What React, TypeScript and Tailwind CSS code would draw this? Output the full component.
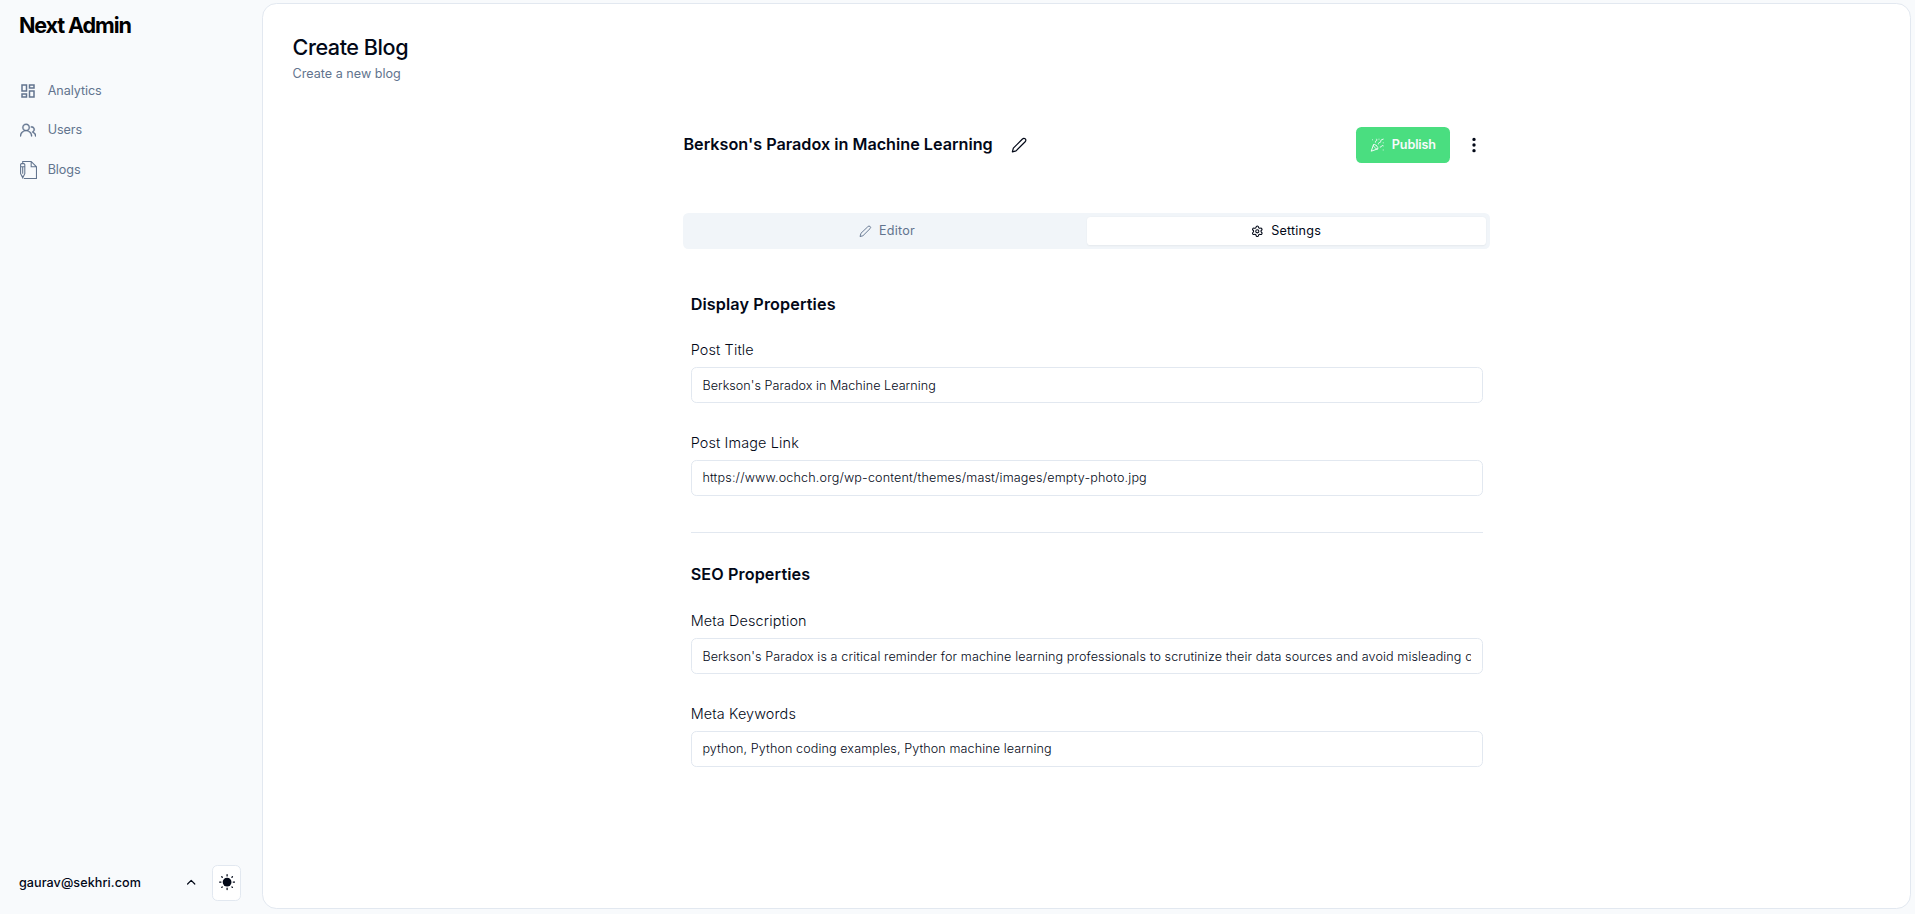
import type { ReactNode } from "react";
import { ChevronUp, PartyPopper, Settings } from "lucide-react";
import { BsThreeDotsVertical } from "react-icons/bs";
import { GoPeople } from "react-icons/go";
import { MdOutlineDashboard } from "react-icons/md";
import { TfiWrite } from "react-icons/tfi";

function PencilIcon({ size, strokeWidth }: { size: number; strokeWidth: number }) {
  return (
    <svg
      width={size}
      height={size}
      viewBox="0 0 24 24"
      fill="none"
      stroke="currentColor"
      strokeWidth={strokeWidth}
      strokeLinecap="round"
      strokeLinejoin="round"
      className="shrink-0"
    >
      <path d="M17 3a2.85 2.83 0 1 1 4 4L7.5 20.5 2 22l1.5-5.5Z" />
    </svg>
  );
}

function SunIcon() {
  return (
    <svg width="18" height="18" viewBox="0 0 18 18" fill="none" stroke="currentColor" className="shrink-0">
      <circle cx="9" cy="9" r="4.9" fill="currentColor" stroke="none" />
      <path
        d="M9 .7v1.5M9 15.8v1.5M.7 9h1.5M15.8 9h1.5M3.1 3.1l.5.5M14.4 14.4l.5.5M3.1 14.9l.5-.5M14.4 3.6l.5-.5"
        strokeWidth="1.4"
        strokeLinecap="round"
      />
    </svg>
  );
}

function NavItem({ icon, label }: { icon: ReactNode; label: string }) {
  return (
    <a className="flex h-10 items-center text-sm font-normal text-slate-500">
      <span className="mr-3 flex w-5 justify-center">{icon}</span>
      <span className="tracking-[-0.006em]">{label}</span>
    </a>
  );
}

function Field({ label, value, tracking = "" }: { label: string; value: string; tracking?: string }) {
  return (
    <div className="flex flex-col gap-2">
      <label className="pt-px text-base leading-[22px] font-light tracking-[0.01em]">{label}</label>
      <input
        className={`h-10 w-full rounded-md border border-slate-200 bg-white px-3 text-sm font-light outline-none ${tracking}`}
        defaultValue={value}
      />
    </div>
  );
}

export default function App() {
  return (
    <div className="flex h-[calc(100vh/0.9)] bg-slate-50 px-1 pt-[3px] pb-[6px] font-['Inter',sans-serif] text-[#020817] [zoom:0.9]">
      <aside className="flex w-[287px] shrink-0 flex-col justify-between pt-[9px] pb-[9px] pl-[17px]">
        <div>
          <h1 className="text-2xl font-bold tracking-[-0.051em] text-black">Next Admin</h1>
          <nav className="mt-[37px] flex flex-col gap-1">
            <NavItem icon={<MdOutlineDashboard size={20} />} label="Analytics" />
            <NavItem icon={<GoPeople size={18} stroke="currentColor" strokeWidth={0.6} />} label="Users" />
            <NavItem icon={<TfiWrite size={20} />} label="Blogs" />
          </nav>
        </div>
        <div className="flex items-center pr-[23px]">
          <span className="flex-1 text-sm font-medium tracking-[0.006em]">gaurav@sekhri.com</span>
          <ChevronUp size={16} strokeWidth={2} className="mr-4" />
          <button className="flex h-10 w-8 items-center justify-center rounded-md border border-slate-200 bg-white">
            <SunIcon />
          </button>
        </div>
      </aside>

      <main className="flex-1 rounded-2xl border border-slate-200 bg-white px-8 pt-[33px]">
        <h2 className="pl-px text-2xl font-medium tracking-[-0.021em]">Create Blog</h2>
        <p className="mt-[3px] pl-px text-sm text-slate-500">Create a new blog</p>

        <div className="mx-auto mt-[49px] w-full max-w-4xl">
          <div className="flex h-10 items-center">
            <h3 className="text-lg font-semibold">Berkson's Paradox in Machine Learning</h3>
            <button className="ml-5">
              <PencilIcon size={18} strokeWidth={1.8} />
            </button>
            <button className="ml-auto flex h-10 items-center gap-2 rounded-md bg-[#4ade80] px-4 text-sm font-semibold tracking-[-0.01em] text-slate-50">
              <PartyPopper size={16} strokeWidth={1.6} />
              Publish
            </button>
            <button className="mr-2 ml-4">
              <BsThreeDotsVertical size={20} />
            </button>
          </div>

          <div className="mt-[55.5px] grid h-10 grid-cols-2 rounded-md bg-slate-100 p-[4.5px] text-sm tracking-[0.016em]">
            <button className="flex items-center justify-center gap-2 text-slate-500">
              <PencilIcon size={14} strokeWidth={1.8} />
              Editor
            </button>
            <button className="flex items-center justify-center gap-2 rounded-sm bg-white shadow-xs">
              <Settings size={14} strokeWidth={2} />
              Settings
            </button>
          </div>

          <div className="mt-[47.5px] px-2">
            <h4 className="text-lg font-semibold tracking-[0.007em]">Display Properties</h4>
            <div className="mt-[25px] flex flex-col gap-8">
              <Field label="Post Title" value="Berkson's Paradox in Machine Learning" tracking="tracking-[0.002em]" />
              <Field
                label="Post Image Link"
                value="https://www.ochch.org/wp-content/themes/mast/images/empty-photo.jpg"
                tracking="tracking-[0.012em]"
              />
            </div>
            <hr className="mt-10 mb-8 border-slate-200" />
            <h4 className="text-lg font-semibold tracking-[0.007em]">SEO Properties</h4>
            <div className="mt-[26px] flex flex-col gap-8">
              <Field
                label="Meta Description"
                value="Berkson's Paradox is a critical reminder for machine learning professionals to scrutinize their data sources and avoid misleading conclusions."
                tracking="tracking-[0.0078em]"
              />
              <Field
                label="Meta Keywords"
                value="python, Python coding examples, Python machine learning"
                tracking="tracking-[0.007em]"
              />
            </div>
          </div>
        </div>
      </main>
    </div>
  );
}
